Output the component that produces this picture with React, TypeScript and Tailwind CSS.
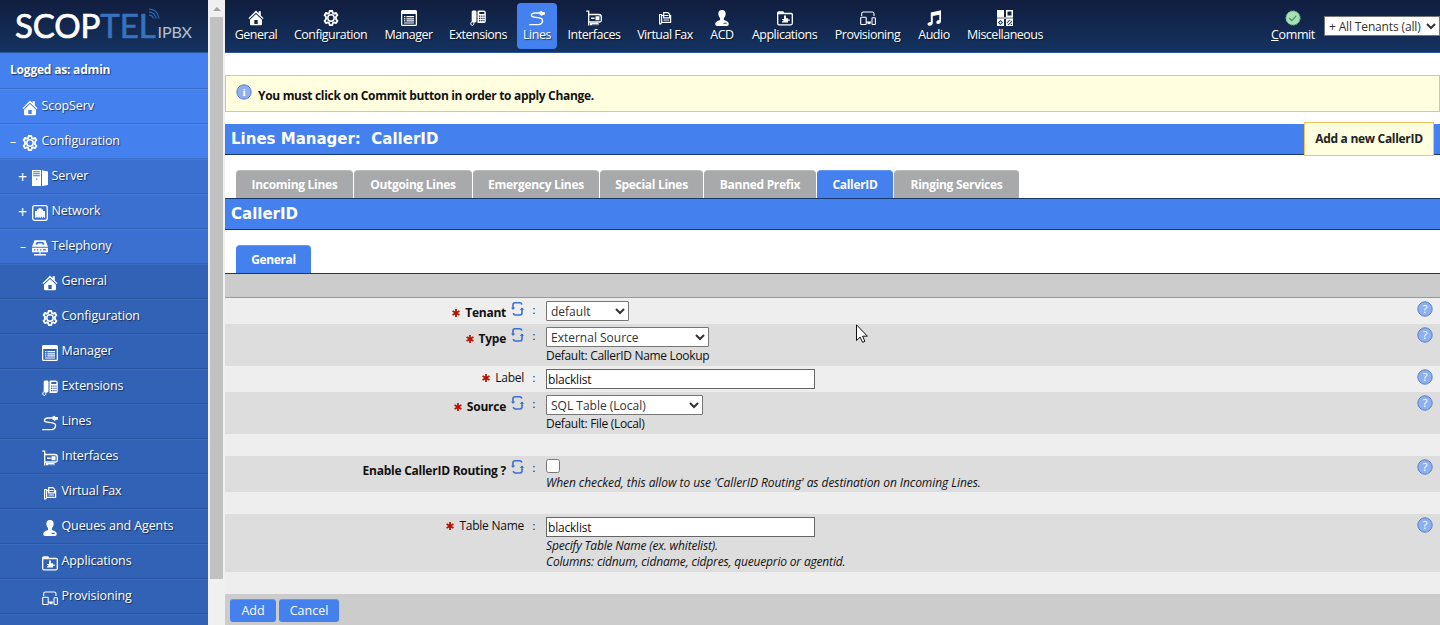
import React, { useState } from 'react';
import clsx from 'clsx';

type IconName =
  | 'home' | 'gear' | 'manager' | 'phone' | 'lines' | 'card' | 'fax' | 'user'
  | 'folder' | 'devices' | 'audio' | 'misc' | 'server' | 'network' | 'telephony';

const shapes: Record<IconName, React.ReactNode> = {
  home: (
    <>
      <path d="M8 .6 10.6 3.2V1.3h2.2v4.1l2.8 2.8-.9.9L8 2.7 1.3 9.1l-.9-.9z" />
      <path fillRule="evenodd" d="M8 4 2 9.8V14q0 1.3 1.3 1.3h9.4q1.3 0 1.3-1.3V9.8zM6.3 10h3.4v4.1H6.3z" />
    </>
  ),
  gear: (
    <>
      <path
        fill="none" stroke="currentColor" strokeWidth="1.8" strokeLinejoin="round"
        d="M6.7 1h2.6l.5 2 1.3.7 2-.8 1.4 2.3-1.5 1.5v2.6l1.5 1.5-1.4 2.3-2-.7-1.3.7-.5 2H6.700l-.5-2-1.3-.7-2 .7-1.4-2.3L3 9.300V6.700L1.500 5.200l1.400-2.300 2 .8L6.200 3z"
      />
      <circle cx="8" cy="8" r="3.2" fill="none" stroke="currentColor" strokeWidth="1.500" />
    </>
  ),
  manager: (
    <>
      <path fillRule="evenodd" d="M1.500 0h13Q16 0 16 1.500v13q0 1.500-1.500 1.500h-13Q0 16 0 14.500v-13Q0 0 1.500 0zM1.300 4v10.700h13.400V4z" />
      <path d="M3 6h1.400v1.200H3zM5.400 6h7.600v1.200H5.400zM3 8.200h1.400v1.200H3zM5.400 8.200h7.600v1.200H5.400zM3 10.300h1.400v1.200H3zM5.400 10.300h7.600v1.200H5.400zM3 12.400h10v1.100H3z" />
    </>
  ),
  phone: (
    <>
      <path d="M3 .4h2.300Q6.500.4 6.500 2v9q0 1.600-1.600 1.600H3Q1.700 12.600 1.700 11V2Q1.700.4 3 .4z" />
      <path d="M2.500 11.500Q.4 12 .7 14q.3 1.500 2 1.400Q4.200 15.100 4 12" fill="none" stroke="currentColor" />
      <path fillRule="evenodd" d="M8.600.4h5Q15.800.4 15.800 2.500v8.800q0 1.700-1.700 1.700H7.500V1.500Q7.500.4 8.600.4zM9.300 2v2h5V2zM9 5.600v1.200h1.300V5.600zm2.200 0v1.200h1.300V5.600zm2.200 0v1.200h1.200V5.600zM9 7.800V9h1.300V7.800zm2.200 0V9h1.300V7.800zm2.200 0V9h1.200V7.800zM9 10v1.200h1.300V10zm2.200 0v1.200h1.300V10zm2.200 0v1.200h1.200V10z" />
    </>
  ),
  lines: (
    <>
      <path fill="none" stroke="currentColor" strokeWidth="1.300" d="M11 3H6Q2.400 3.300 2.400 5.200q0 1.600 3 2l5 .7q3.300.6 3.200 3-.2 3-3.600 3.700H.2" />
      <path d="M10.500 1.500 13 .8v1l3 .4v2.200l-2.500.6-.4.900-2.600-1.400z" />
    </>
  ),
  card: (
    <>
      <path fill="none" stroke="currentColor" strokeWidth="1.300" d="M.2 1.200h2.500v14.300M2.700 4.500h10Q15.300 4.500 15.300 7v3.500q0 1.500-1.500 1.500H2.700" />
      <path d="M9.500 6.300h4v4h-4zM5 7.500h3.600V9H5zM4 13h8.500v2.300H11.500v-1.200h-1v1.200h-1v-1.200h-1v1.200h-1v-1.200h-1v1.200H4z" />
    </>
  ),
  fax: (
    <g fill="none" stroke="currentColor" strokeWidth="1.200">
      <path d="M2.600 4.500h2v8.200L3.800 14H2.600zM4.800 5.500h2m6 0h.8v6.900H4.800M6.700 7.800V2.600h4.200l1.700 1.700v3.500zM7.500 5.500h4M6.500 10h5.500" />
    </g>
  ),
  user: (
    <>
      <path d="M8 0q3.700 0 3.700 3.800 0 3.100-1.800 4.500v1.600q4.900 1.500 4.900 4 0 2-2 2H3.200q-2 0-2-2 0-2.500 4.900-4V8.300Q4.300 6.900 4.300 3.800 4.300 0 8 0z" />
      <path className="text-[#27508f]" stroke="currentColor" d="M9.500 13.300h3.200" />
    </>
  ),
  folder: (
    <>
      <path fill="none" stroke="currentColor" strokeWidth="1.300" d="M.7 13.300V3q0-1 1-1h4.200l1 1.500h7.400q1 0 1 1v8.800q0 1.500-1.300 1.500H2q-1.300 0-1.300-1.500z" />
      <path d="M.7 2.200h5.600v2H.7zM7 5.500h2v2.700h2v1.200h1.800v1.300H11v1.800H5v-1.300h1.300v-1.300H5V9h2z" />
    </>
  ),
  devices: (
    <g fill="none" stroke="currentColor" strokeWidth="1.100">
      <path d="M1.700 6V3.700Q1.700 2 3.400 2h8.900q1.700 0 1.700 1.700V6M6 12h5" />
      <rect x=".7" y="7.200" width="5.500" height="7.300" rx=".7" />
      <rect x="12" y="7.800" width="3.400" height="6.700" rx=".7" />
      <path strokeWidth="2.200" d="M7.500 13h3" />
    </g>
  ),
  audio: (
    <path d="M4.800 2.500 15 .3v11.200q-.2 2.400-2.700 2.400-2 0-2-1.500 0-2 3-2.300V4.700L6.800 6v7.100q-.3 2.600-3 2.600-2.300 0-2.300-1.500 0-2.100 3.300-2.300z" />
  ),
  misc: (
    <>
      <path opacity=".65" d="M0 7h16v2H0z" />
      <path d="M0 0h7v7H0z" />
      <path fillRule="evenodd" d="M9 0h7v7H9zM10.500 1.500v4h4v-4z" />
      <path fillRule="evenodd" d="M0 9h7v7H0zM3.500 9.900.9 12.500l2.600 2.600 2.600-2.600z" />
      <path d="m3.500 11.200 1.300 1.300-1.300 1.300-1.300-1.300z" />
      <path fillRule="evenodd" d="M9 9h7v7H9zM10 12.300l2.300-2.300h1.300L10 13.600zM10.500 15 15 10.500v1.300L11.800 15zM13.300 15 15 13.300V15z" />
    </>
  ),
  server: (
    <>
      <path fillRule="evenodd" d="M0 0h9v16H0zM1.200 1.300v1h6.600v-1zm0 2v1h6.600v-1zm0 2v1h6.600v-1zm3 3.200v1.200h1.200V8.500z" />
      <path d="M10 .2 16 1.500V15l-6 1z" />
    </>
  ),
  network: (
    <>
      <rect x=".7" y=".7" width="14.600" height="14.600" rx="2" fill="none" stroke="currentColor" strokeWidth="1.300" />
      <path d="M3 6h2V4.500h1.500V3.300h3v1.200H11V6h2v6.800h-1.200v-1h-.8v1H9.800v-1H9v1H7.500v-1h-.8v1H5.400v-1h-.8v1H3z" />
    </>
  ),
  telephony: (
    <>
      <path fillRule="evenodd" d="M2.500.3h11L16 6.800H0zM3.800 4.800h1.800V3.600h4.800v1.200h1.800V3Q11.500 1.800 8 1.800T3.800 3z" />
      <path fillRule="evenodd" d="M0 7.800h16v4.400H0zM2 9.200v1.300h1.300V9.200zm3 0v1.300h1.300V9.200zm3 0v1.300h1.300V9.200zm3 0v1.300h3V9.200z" />
      <path d="M7.500 12h1v2H14v1.500H2V14h5.500z" />
    </>
  ),
};

const Icon = ({ name, className }: { name: IconName; className?: string }) => (
  <svg viewBox="0 0 16 16" fill="currentColor" className={clsx('h-4 w-4 shrink-0 text-white', className)}>
    {shapes[name]}
  </svg>
);

const menu: { label: string; icon: IconName; width: string }[] = [
  { label: 'General', icon: 'home', width: 'w-[58px]' },
  { label: 'Configuration', icon: 'gear', width: 'w-[91px]' },
  { label: 'Manager', icon: 'manager', width: 'w-[65px]' },
  { label: 'Extensions', icon: 'phone', width: 'w-[74px]' },
  { label: 'Lines', icon: 'lines', width: 'w-[44px]' },
  { label: 'Interfaces', icon: 'card', width: 'w-[70px]' },
  { label: 'Virtual Fax', icon: 'fax', width: 'w-[72px]' },
  { label: 'ACD', icon: 'user', width: 'w-[42px]' },
  { label: 'Applications', icon: 'folder', width: 'w-[83px]' },
  { label: 'Provisioning', icon: 'devices', width: 'w-[83px]' },
  { label: 'Audio', icon: 'audio', width: 'w-[50px]' },
  { label: 'Miscellaneous', icon: 'misc', width: 'w-[92px]' },
];

const tree: { label?: string; icon: IconName; level: number; sign?: string }[] = [
  { label: 'ScopServ', icon: 'home', level: 0 },
  { label: 'Configuration', icon: 'gear', level: 0, sign: '–' },
  { label: 'Server', icon: 'server', level: 1, sign: '+' },
  { label: 'Network', icon: 'network', level: 1, sign: '+' },
  { label: 'Telephony', icon: 'telephony', level: 1, sign: '–' },
  { label: 'General', icon: 'home', level: 2 },
  { label: 'Configuration', icon: 'gear', level: 2 },
  { label: 'Manager', icon: 'manager', level: 2 },
  { label: 'Extensions', icon: 'phone', level: 2 },
  { label: 'Lines', icon: 'lines', level: 2 },
  { label: 'Interfaces', icon: 'card', level: 2 },
  { label: 'Virtual Fax', icon: 'fax', level: 2 },
  { label: 'Queues and Agents', icon: 'user', level: 2 },
  { label: 'Applications', icon: 'folder', level: 2 },
  { label: 'Provisioning', icon: 'devices', level: 2 },
  { icon: 'audio', level: 2 },
];

const levels = [
  'bg-[#4480ee] border-t-[#4d8af3] border-b-[#3a6ecb] pl-2',
  'bg-[#3b70d0] border-t-[#4379d7] border-b-[#3263b9] pl-[18px]',
  'bg-[#3262b6] border-t-[#3b6bc0] border-b-[#2a569f] pl-[28px]',
];

const tabs = [
  { label: 'Incoming Lines', width: 'w-[117px]' },
  { label: 'Outgoing Lines', width: 'w-[118px]' },
  { label: 'Emergency Lines', width: 'w-[126px]' },
  { label: 'Special Lines', width: 'w-[103px]' },
  { label: 'Banned Prefix', width: 'w-[112px]' },
  { label: 'CallerID', width: 'w-[76px]' },
  { label: 'Ringing Services', width: 'w-[125px]' },
];

const Logo = () => (
  <div className="relative flex h-[52px] items-baseline bg-linear-to-b from-[#101d3e] to-[#143361] pl-[15px] font-['Lato',sans-serif] whitespace-nowrap">
    <span className="text-[33px] leading-[50px] text-white [-webkit-text-stroke:0.7px]">SCOP</span>
    <span className="text-[33px] leading-[50px] text-[#3672bd] [-webkit-text-stroke:0.7px]">TEL</span>
    <span className="ml-0.5 text-[16px] leading-none text-[#b4c1d4]">IPBX</span>
    <svg viewBox="0 0 12 12" className="absolute top-[8px] left-[148px] h-3 w-3 text-[#3672bd]" fill="none" stroke="currentColor" strokeWidth="1.100">
      <path d="M1 1q8.500.2 10 9.500M1 4q5.700.2 7.200 6.500M1 7q3.400.2 4.400 3.500" />
    </svg>
  </div>
);

const Sidebar = () => (
  <aside className="w-[208px] shrink-0 text-[12.500px] tracking-[-0.1px] text-white">
    <Logo />
    <div className="flex h-[37px] items-center border-t border-b border-t-[#2a559f] border-b-[#3a6ecb] bg-[#4480ee] pb-0.5 pl-2.5 text-[12px] font-bold tracking-[-0.2px] text-shadow-[1px_1px_1px_#00000088]">
      Logged as: admin
    </div>
    {tree.map((item, i) => (
      <div key={i} className={clsx('flex h-[35px] items-center border-t border-b whitespace-nowrap', levels[item.level])}>
        <span className={clsx('w-[14px] shrink-0', item.sign === '+' ? 'text-[16px]' : 'pl-0.5 text-[12px]')}>{item.sign}</span>
        <Icon name={item.icon} className="mt-0.5" />
        {item.label && <span className="ml-[3.500px] text-shadow-[1px_1px_1px_#00000088]">{item.label}</span>}
      </div>
    ))}
  </aside>
);

const Scrollbar = () => (
  <div className="w-[17px] shrink-0 bg-[#f0f0f0]">
    <div className="flex h-[17px] items-center justify-center">
      <svg viewBox="0 0 8 4" className="h-1 w-2" fill="#a3a3a3"><path d="M4 0 8 4H0z" /></svg>
    </div>
    <div className="ml-[2px] h-[562px] w-[13px] bg-[#c1c1c1]" />
  </div>
);

const Header = () => (
  <header className="flex h-[53px] shrink-0 border-b border-[#2a559f] bg-linear-to-b from-[#101d3e] to-[#143361] pl-[2px] text-[12.500px] text-white">
    {menu.map(({ label, icon, width }) => (
      <a key={label} className={clsx('shrink-0 px-0.5 pt-[3px]', width)}>
        <div className={clsx('flex h-[46px] flex-col items-center rounded-[4px] pt-[7px] whitespace-nowrap', label === 'Lines' && 'bg-[#4480ee]')}>
          <Icon name={icon} />
          <span className="leading-[18px] tracking-[-0.5px] text-shadow-[1px_1px_1px_#00000088]">{label}</span>
        </div>
      </a>
    ))}
    <div className="ml-auto flex w-[50px] flex-col items-center pt-[10px]">
      <svg viewBox="0 0 16 16" className="h-4 w-4">
        <circle cx="8" cy="8" r="7.100" fill="#a9dfb4" stroke="#68b58a" strokeDasharray="2 1" />
        <path d="m4.300 8 2.500 2.600 4.600-5" fill="none" stroke="#3f9068" strokeWidth="1.200" />
      </svg>
      <span className="leading-[18px] tracking-[-0.4px]"><u>C</u>ommit</span>
    </div>
    <select className="mt-4 ml-[6px] h-5 w-[116px] shrink-0 border border-[#767676] bg-white text-[12px] tracking-[-0.150px] text-[#333]">
      <option>+ All Tenants (all)</option>
    </select>
  </header>
);

const Title = ({ children }: { children: React.ReactNode }) => (
  <div className="flex h-[31px] shrink-0 items-center border-b border-[#17386c] bg-[#4480ee] pt-px pl-1.5 font-['DejaVu_Sans',sans-serif] text-[15px] font-bold whitespace-pre text-white">
    {children}
  </div>
);

const Sync = () => (
  <svg viewBox="0 0 13 16" className="ml-[5px] h-4 w-[13px] shrink-0 -translate-y-px" fill="none" stroke="#3b6fd0" strokeWidth="1.600">
    <path d="M2 7.500V3.700Q2 1.700 4 1.700h4.800q1.700 0 1.900 2M11 7v4.800q0 2.200-2 2.200H4.300q-1.700 0-1.900-2" />
    <path d="M0 6.500h4.200L2 9zM8.800 9H13l-2.100-2.500z" fill="#3b6fd0" stroke="none" />
  </svg>
);

const Help = () => (
  <svg viewBox="0 0 16 16" className="mt-[3px] mr-[7.500px] h-4 w-4 shrink-0">
    <circle cx="8" cy="8" r="7.200" fill="#8fb0ee" stroke="#5c80c8" />
    <text x="8" y="12" textAnchor="middle" fontSize="11" fill="#fff" fontFamily="Open Sans, sans-serif">?</text>
  </svg>
);

type RowProps = { label: string; required?: boolean; sync?: boolean; dark?: boolean; height: string; children: React.ReactNode };

const Row = ({ label, required, sync, dark, height, children }: RowProps) => (
  <div className={clsx('flex shrink-0', height, dark ? 'bg-[#ddd]' : 'bg-[#eee]')}>
    <div className="flex h-6 w-[312px] items-center justify-end">
      {required && (
        <svg viewBox="0 0 10 10" className={clsx('mr-[5px] h-2 w-2', sync && 'translate-y-[3px]')} stroke="#b81400" strokeWidth="2.200">
          <path d="M5 0v10M.7 2.500l8.600 5M9.300 2.500l-8.600 5" />
        </svg>
      )}
      <span className={clsx('tracking-[-0.250px]', sync && 'translate-y-[3px] font-bold')}>{label}</span>
      {sync && <Sync />}
      <span className="ml-[7px] w-[6px] text-center text-[11px]">:</span>
    </div>
    <div className="ml-[9px] flex-1 pt-[3px] leading-4">{children}</div>
    <Help />
  </div>
);

const Spacer = () => <div className="h-[22px] shrink-0 bg-[#eee]" />;

const Field = ({ initial }: { initial: string }) => {
  const [value, setValue] = useState(initial);
  return (
    <input
      value={value}
      onChange={e => setValue(e.target.value)}
      className="block h-5 w-[269px] border border-[#666] bg-white px-px pt-px text-[12px] tracking-[-0.200px]"
    />
  );
};

const selectStyle = 'block h-5 rounded-[1px] border border-[#767676] bg-white text-[12px] text-[#333]';

const App = () => {
  return (
    <div className="relative flex h-[625px] w-[1440px] overflow-hidden bg-white font-['Open_Sans','Noto_Sans',sans-serif] text-[12px] text-[#111]">
      <Sidebar />
      <Scrollbar />
      <main className="flex min-w-0 flex-1 flex-col">
        <Header />

        <div className="mt-[22px] flex h-[37px] shrink-0 border border-[#f3c35c] bg-[#ffffe0] pl-2.5 font-bold">
          <svg viewBox="0 0 16 16" className="mt-2 h-4 w-4">
            <circle cx="8" cy="8" r="7.200" fill="#8fb0ee" stroke="#5c80c8" />
            <text x="8" y="12" textAnchor="middle" fontSize="11" fill="#fff" fontFamily="Liberation Serif, serif">i</text>
          </svg>
          <span className="ml-[6px] pt-[11px] leading-[18px] tracking-[-0.320px]">You must click on Commit button in order to apply Change.</span>
        </div>

        <div className="mt-3 shrink-0">
          <Title>
            Lines Manager:{'  '}CallerID
            <button className="z-10 -mt-0.5 mr-[6px] ml-auto h-[34px] w-[130px] shrink-0 border border-[#f3c35c] bg-[#ffffe0] font-['Open_Sans',sans-serif] text-[12px] tracking-[-0.300px] text-[#222]">
              Add a new CallerID
            </button>
          </Title>
        </div>

        <nav className="mt-[15px] flex h-[29px] shrink-0 gap-px border-b border-[#17386c] pl-[11px] font-bold text-white">
          {tabs.map(({ label, width }) => (
            <a
              key={label}
              className={clsx(
                'flex h-7 shrink-0 items-center justify-center rounded-t-[4px] border-t pt-px tracking-[-0.300px] whitespace-nowrap',
                width,
                label === 'CallerID' ? 'border-[#6498f3] bg-[#4480ee]' : 'border-[#bbbdbd] bg-[#a7a9aa]'
              )}
            >
              {label}
            </a>
          ))}
        </nav>
        <Title>CallerID</Title>

        <nav className="mt-[15px] flex h-[29px] shrink-0 border-b border-[#17386c] pl-[11px] font-bold text-white">
          <a className="flex h-7 w-[75px] items-center justify-center rounded-t-[4px] border-t border-[#6498f3] bg-[#4480ee] pt-px tracking-[-0.400px]">General</a>
        </nav>
        <div className="h-6 shrink-0 border-b border-[#999] bg-[#ccc]" />

        <Row label="Tenant" required sync height="h-[26px]">
          <select className={clsx(selectStyle, 'w-[83px]')}><option>default</option></select>
        </Row>
        <Row label="Type" required sync dark height="h-[42px]">
          <select className={clsx(selectStyle, 'w-[163px]')}><option>External Source</option></select>
          <div className="pt-px tracking-[-0.320px]">Default: CallerID Name Lookup</div>
        </Row>
        <Row label="Label" required height="h-[26px]">
          <Field initial="blacklist" />
        </Row>
        <Row label="Source" required sync dark height="h-[42px]">
          <select className={clsx(selectStyle, 'w-[157px]')}><option>SQL Table (Local)</option></select>
          <div className="pt-px tracking-[-0.320px]">Default: File (Local)</div>
        </Row>
        <Spacer />
        <Row label="Enable CallerID Routing ?" sync dark height="h-[36px]">
          <input type="checkbox" className="block h-[14px] w-[14px]" />
          <div className="pt-[2px] tracking-[-0.070px] italic">When checked, this allow to use 'CallerID Routing' as destination on Incoming Lines.</div>
        </Row>
        <Spacer />
        <Row label="Table Name" required dark height="h-[58px]">
          <Field initial="blacklist" />
          <div className="pt-px tracking-[-0.170px] italic">Specify Table Name (ex. whitelist).<br />Columns: cidnum, cidname, cidpres, queueprio or agentid.</div>
        </Row>
        <Spacer />

        <div className="flex flex-1 gap-[3px] bg-[#ccc] pt-[5px] pl-[5px] text-[12.500px] text-white">
          <button className="h-[23px] w-[46px] rounded-[3px] border-t border-[#6498f3] bg-[#4480ee] pt-px">Add</button>
          <button className="h-[23px] w-[60px] rounded-[3px] border-t border-[#6498f3] bg-[#4480ee] pt-px">Cancel</button>
        </div>
      </main>

      {/* mouse pointer */}
      <svg viewBox="0 0 12 19" className="absolute top-[324px] left-[856px] h-[19px] w-3" fill="#fff" stroke="#111" strokeWidth="1">
        <path d="M.5.8v15.700l3.600-3.400 2.500 5.200 2.300-1-2.400-5.100h4.900z" />
      </svg>
    </div>
  );
};

export default App;
